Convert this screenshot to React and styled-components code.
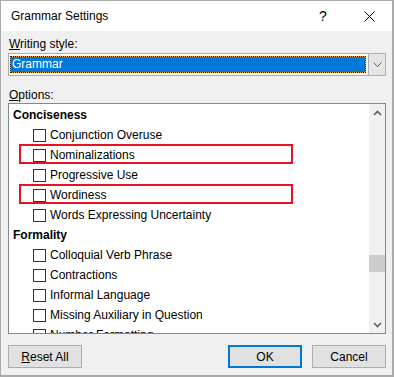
import React from "react";
import styled, { createGlobalStyle } from "styled-components";

const GlobalStyle = createGlobalStyle`
  html, body {
    margin: 0;
    padding: 0;
    background: #ffffff;
  }
  body {
    font-family: "Liberation Sans", Arial, sans-serif;
    font-size: 12px;
    color: #000;
  }
`;

const sections = [
  {
    title: "Conciseness",
    items: [
      { label: "Conjunction Overuse" },
      { label: "Nominalizations", marked: true },
      { label: "Progressive Use" },
      { label: "Wordiness", marked: true },
      { label: "Words Expressing Uncertainty" },
    ],
  },
  {
    title: "Formality",
    items: [
      { label: "Colloquial Verb Phrase" },
      { label: "Contractions" },
      { label: "Informal Language" },
      { label: "Missing Auxiliary in Question" },
      { label: "Number Formatting" },
      { label: "Slang" },
    ],
  },
];

export default function App() {
  return (
    <>
      <GlobalStyle />
      <Window>
        <TitleBar>
          <Title>Grammar Settings</Title>
          <CaptionButton>?</CaptionButton>
          <CaptionButton>
            <svg width="11" height="11" viewBox="0 0 11 11">
              <path d="M0.5 0.5 L10.5 10.5 M10.5 0.5 L0.5 10.5" stroke="#000" strokeWidth="1" />
            </svg>
          </CaptionButton>
        </TitleBar>

        <Body>
          <FieldLabel $top={5}>
            <u>W</u>riting style:
          </FieldLabel>
          <Combo>
            <Selection>Grammar</Selection>
            <DropButton>
              <svg width="9" height="5" viewBox="0 0 9 5">
                <path d="M0.5 0.5 L4.5 4.5 L8.5 0.5" fill="none" stroke="#606060" strokeWidth="1" />
              </svg>
            </DropButton>
          </Combo>

          <FieldLabel $top={11}>
            <u>O</u>ptions:
          </FieldLabel>
          <ListBox>
            <ListContent>
              {sections.map((s) => (
                <React.Fragment key={s.title}>
                  <Heading>{s.title}</Heading>
                  {s.items.map((it) => (
                    <Row key={it.label}>
                      <Check />
                      <span>{it.label}</span>
                      {it.marked && <Highlight />}
                    </Row>
                  ))}
                </React.Fragment>
              ))}
            </ListContent>
            <Scrollbar>
              <ScrollButton>
                <svg width="9" height="6" viewBox="0 0 9 6">
                  <path d="M1 5 L4.5 1.5 L8 5" fill="none" stroke="#606060" strokeWidth="1.6" />
                </svg>
              </ScrollButton>
              <Track>
                <Thumb />
              </Track>
              <ScrollButton>
                <svg width="9" height="6" viewBox="0 0 9 6">
                  <path d="M1 1 L4.5 4.5 L8 1" fill="none" stroke="#606060" strokeWidth="1.6" />
                </svg>
              </ScrollButton>
            </Scrollbar>
          </ListBox>

          <ButtonRow>
            <Button $push>
              <u>R</u>eset All
            </Button>
            <Button $primary>OK</Button>
            <Button>Cancel</Button>
          </ButtonRow>
        </Body>
      </Window>
    </>
  );
}

// Styled Components

const Window = styled.div`
  width: 394px;
  height: 377px;
  box-sizing: border-box;
  border: 1px solid #aaaaaa;
  border-right-width: 2px;
  border-bottom-width: 2px;
  background: #f0f0f0;
  display: flex;
  flex-direction: column;
`;

const TitleBar = styled.div`
  height: 30px;
  background: #ffffff;
  display: flex;
  align-items: center;
  padding-left: 10px;
`;

const Title = styled.div`
  flex: 1;
  font-size: 12px;
  color: #000;
`;

const CaptionButton = styled.div`
  width: 46px;
  height: 30px;
  display: flex;
  align-items: center;
  justify-content: center;
  font-size: 14px;
  color: #000;
`;

const Body = styled.div`
  flex: 1;
  display: flex;
  flex-direction: column;
  padding: 0 6px 7px 7px;
`;

const FieldLabel = styled.div`
  margin-top: ${(p) => p.$top}px;
  height: 16px;
  line-height: 16px;
  padding-left: 1px;
`;

const Combo = styled.div`
  margin-top: 1px;
  height: 23px;
  box-sizing: border-box;
  border: 1px solid #adadad;
  background: #ffffff;
  display: flex;
`;

const Selection = styled.div`
  flex: 1;
  margin: 2px 2px 2px 1px;
  box-sizing: border-box;
  border: 1px dotted #1a1a1a;
  background: linear-gradient(#0078d7, #0078d7) padding-box, #f0a33a border-box;
  color: #ffffff;
  line-height: 15px;
  padding-left: 1px;
`;

const DropButton = styled.div`
  width: 16px;
  background: #e5e5e5;
  border-left: 1px solid #adadad;
  display: flex;
  align-items: center;
  justify-content: center;
`;

const ListBox = styled.div`
  height: 231px;
  box-sizing: border-box;
  border: 1px solid #828790;
  background: #ffffff;
  display: flex;
`;

const ListContent = styled.div`
  flex: 1;
  overflow: hidden;
  padding: 1px 0 0 4px;
`;

const Heading = styled.div`
  height: 20px;
  line-height: 20px;
  font-weight: bold;
`;

const Row = styled.div`
  position: relative;
  height: 20px;
  display: flex;
  align-items: center;
  gap: 4px;
  padding-left: 20px;
`;

const Check = styled.span`
  width: 13px;
  height: 13px;
  box-sizing: border-box;
  border: 1px solid #333333;
  background: #ffffff;
  flex: none;
`;

const Highlight = styled.span`
  position: absolute;
  left: 6px;
  top: -1px;
  width: 274px;
  height: 20px;
  box-sizing: border-box;
  border: 2px solid #e81123;
  pointer-events: none;
`;

const Scrollbar = styled.div`
  width: 16px;
  background: #f0f0f0;
  display: flex;
  flex-direction: column;
`;

const ScrollButton = styled.div`
  height: 17px;
  display: flex;
  align-items: center;
  justify-content: center;
`;

const Track = styled.div`
  flex: 1;
`;

const Thumb = styled.div`
  margin-top: 134px;
  height: 17px;
  background: #cdcdcd;
`;

const ButtonRow = styled.div`
  margin-top: 11px;
  display: flex;
  gap: 10px;
`;

const Button = styled.div`
  width: 74px;
  height: 23px;
  box-sizing: border-box;
  border: ${(p) => (p.$primary ? "2px solid #0078d7" : "1px solid #adadad")};
  background: #e1e1e1;
  display: flex;
  align-items: center;
  justify-content: center;
  margin-right: ${(p) => (p.$push ? "auto" : "0")};
`;
